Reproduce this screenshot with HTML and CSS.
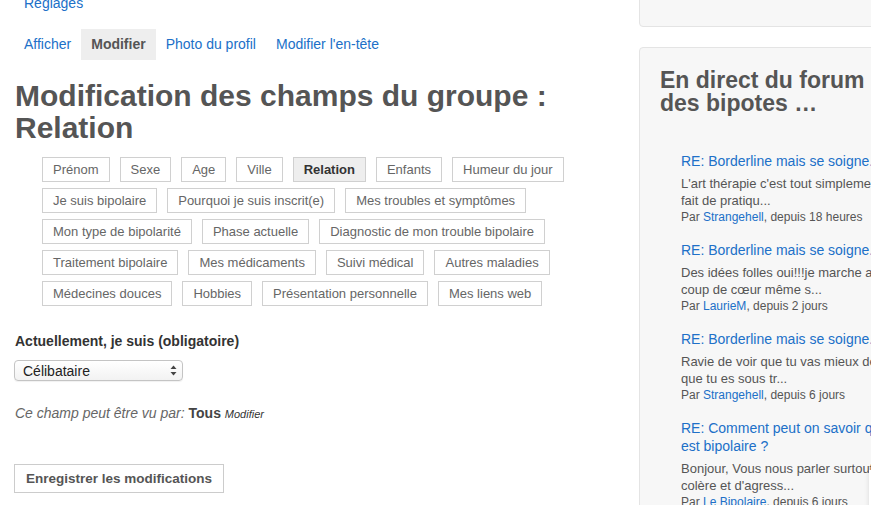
FILE: index.html
```html
<!DOCTYPE html>
<html lang="fr">
<head>
  <meta charset="UTF-8" />
  <meta name="viewport" content="width=device-width, initial-scale=1.0"/>
  <title>Modifier le profil</title>
  <link rel="stylesheet" href="styles.css">
</head>
<body>
  <div class="page">
    <div class="main">
      <nav class="subnav">
        <a href="#">Réglages</a>
      </nav>

      <nav class="tabs">
        <a href="#">Afficher</a>
        <a href="#" class="active">Modifier</a>
        <a href="#">Photo du profil</a>
        <a href="#">Modifier l'en-tête</a>
      </nav>

      <h1>Modification des champs du groupe : Relation</h1>

      <div class="field-tabs">
        <a href="#">Prénom</a>
        <a href="#">Sexe</a>
        <a href="#">Age</a>
        <a href="#">Ville</a>
        <a href="#" class="active">Relation</a>
        <a href="#">Enfants</a>
        <a href="#">Humeur du jour</a>
        <a href="#">Je suis bipolaire</a>
        <a href="#">Pourquoi je suis inscrit(e)</a>
        <a href="#">Mes troubles et symptômes</a>
        <a href="#">Mon type de bipolarité</a>
        <a href="#">Phase actuelle</a>
        <a href="#">Diagnostic de mon trouble bipolaire</a>
        <a href="#">Traitement bipolaire</a>
        <a href="#">Mes médicaments</a>
        <a href="#">Suivi médical</a>
        <a href="#">Autres maladies</a>
        <a href="#">Médecines douces</a>
        <a href="#">Hobbies</a>
        <a href="#">Présentation personnelle</a>
        <a href="#">Mes liens web</a>
      </div>

      <form class="edit-form">
        <label class="field-label" for="relation">Actuellement, je suis (obligatoire)</label>
        <div class="select-wrap">
          <select id="relation">
            <option>Célibataire</option>
            <option>En couple</option>
            <option>Marié(e)</option>
          </select>
          <svg class="select-arrows" width="7" height="11" viewBox="0 0 7 11">
            <path d="M3.5 0.5 L6.5 4 L0.5 4 Z" fill="#444"/>
            <path d="M3.5 10.5 L6.5 7 L0.5 7 Z" fill="#444"/>
          </svg>
        </div>

        <p class="visibility">
          Ce champ peut être vu par: <span class="level">Tous</span> <a href="#" class="change">Modifier</a>
        </p>

        <button type="button" class="save-btn">Enregistrer les modifications</button>
      </form>
    </div>

    <aside class="sidebar">
      <div class="widget widget-top"></div>

      <div class="widget">
        <h2>En direct du forum des bipotes …</h2>
        <ul class="topics">
          <li>
            <a href="#" class="topic-title">RE: Borderline mais se soigne...</a>
            <p class="excerpt">L'art thérapie c'est tout simplement le fait de pratiqu...</p>
            <div class="meta">Par <a href="#">Strangehell</a>, depuis 18 heures</div>
          </li>
          <li>
            <a href="#" class="topic-title">RE: Borderline mais se soigne...</a>
            <p class="excerpt">Des idées folles oui!!!je marche au coup de cœur même s...</p>
            <div class="meta">Par <a href="#">LaurieM</a>, depuis 2 jours</div>
          </li>
          <li>
            <a href="#" class="topic-title">RE: Borderline mais se soigne...</a>
            <p class="excerpt">Ravie de voir que tu vas mieux depuis que tu es sous tr...</p>
            <div class="meta">Par <a href="#">Strangehell</a>, depuis 6 jours</div>
          </li>
          <li>
            <a href="#" class="topic-title">RE: Comment peut on savoir qu'on est bipolaire ?</a>
            <p class="excerpt">Bonjour, Vous nous parler surtout de colère et d'agress...</p>
            <div class="meta">Par <a href="#">Le Bipolaire</a>, depuis 6 jours</div>
          </li>
        </ul>
      </div>
    </aside>
  </div>

  <div class="floating-box"></div>
</body>
</html>
```

FILE: styles.css
```css
html, body {
  overflow: hidden;
}

body {
  margin: 0;
  font-family: "Liberation Sans", Arial, Helvetica, sans-serif;
  background-color: #fff;
  color: #555;
}

a {
  color: #2070c8;
  text-decoration: none;
}

.page {
  display: flex;
  align-items: flex-start;
}

.main {
  flex: 0 0 611px;
  padding-left: 14px;
}

/* top menus */

.subnav {
  margin-top: -6px;
  padding-left: 10px;
  font-size: 14px;
  line-height: 18px;
}

.tabs {
  display: flex;
  margin-top: 17px;
}

.tabs a {
  padding: 7px 10px;
  font-size: 14px;
  line-height: 17px;
}

.tabs a.active {
  background-color: #eee;
  color: #555;
  font-weight: bold;
}

h1 {
  margin: 20px 0 14px 1px;
  font-size: 30px;
  line-height: 31.5px;
  font-weight: bold;
  color: #555;
}

/* profile field groups */

.field-tabs {
  display: flex;
  flex-wrap: wrap;
  gap: 6px 10px;
  padding-left: 28px;
}

.field-tabs a {
  padding: 4px 10px;
  border: 1px solid #d0d0d0;
  font-size: 13px;
  line-height: 15px;
  color: #666;
}

.field-tabs a.active {
  background-color: #eee;
  color: #333;
  font-weight: bold;
}

/* form */

.edit-form {
  margin-top: 25px;
}

.field-label {
  display: block;
  margin-left: 1px;
  font-size: 14px;
  line-height: 20px;
  font-weight: bold;
  color: #333;
}

.select-wrap {
  position: relative;
  width: 169px;
  margin-top: 9px;
}

.select-wrap select {
  appearance: none;
  -webkit-appearance: none;
  width: 169px;
  height: 21px;
  margin: 0;
  padding: 0 20px 0 8px;
  border: 1px solid #c4c4c4;
  border-radius: 4px;
  background: linear-gradient(#fff, #f2f2f2);
  box-shadow: 0 1px 1px rgba(0, 0, 0, 0.06);
  font-family: inherit;
  font-size: 14px;
  color: #222;
  outline: none;
}

.select-arrows {
  position: absolute;
  right: 6px;
  top: 5px;
  pointer-events: none;
}

.visibility {
  margin: 22px 0 0 1px;
  font-size: 14px;
  line-height: 20px;
  font-style: italic;
  color: #666;
}

.visibility .level {
  font-style: normal;
  font-weight: bold;
  color: #444;
}

.visibility .change {
  font-size: 11px;
  color: #333;
}

.save-btn {
  display: block;
  margin-top: 40px;
  height: 29px;
  padding: 0 11px;
  border: 1px solid #ccc;
  background-color: #fff;
  font-family: inherit;
  font-size: 13.5px;
  font-weight: bold;
  color: #555;
  cursor: pointer;
}

/* sidebar */

.sidebar {
  flex: 0 0 290px;
  margin-left: 14px;
}

.widget {
  background-color: #f7f7f7;
  border: 1px solid #e4e4e4;
  border-radius: 4px;
  padding: 21px 21px 20px 20px;
  margin-bottom: 20px;
}

.widget-top {
  height: 25px;
  margin-top: -41px;
}

.widget h2 {
  width: 230px;
  margin: 0;
  font-size: 23px;
  line-height: 23px;
  font-weight: bold;
  color: #555;
}

.topics {
  list-style: none;
  width: 225px;
  margin: 37px 0 0;
  padding-left: 21px;
}

.topics li {
  margin-bottom: 16px;
}

.topic-title {
  display: block;
  font-size: 14px;
  line-height: 18px;
}

.excerpt {
  margin: 5px 0 0;
  font-size: 13px;
  line-height: 17px;
  color: #555;
}

.meta {
  font-size: 12px;
  line-height: 16px;
  color: #555;
}

.floating-box {
  position: fixed;
  left: 869px;
  top: 470px;
  width: 60px;
  height: 80px;
  background-color: #fff;
  box-shadow: 0 0 5px rgba(0, 0, 0, 0.12);
}
```
